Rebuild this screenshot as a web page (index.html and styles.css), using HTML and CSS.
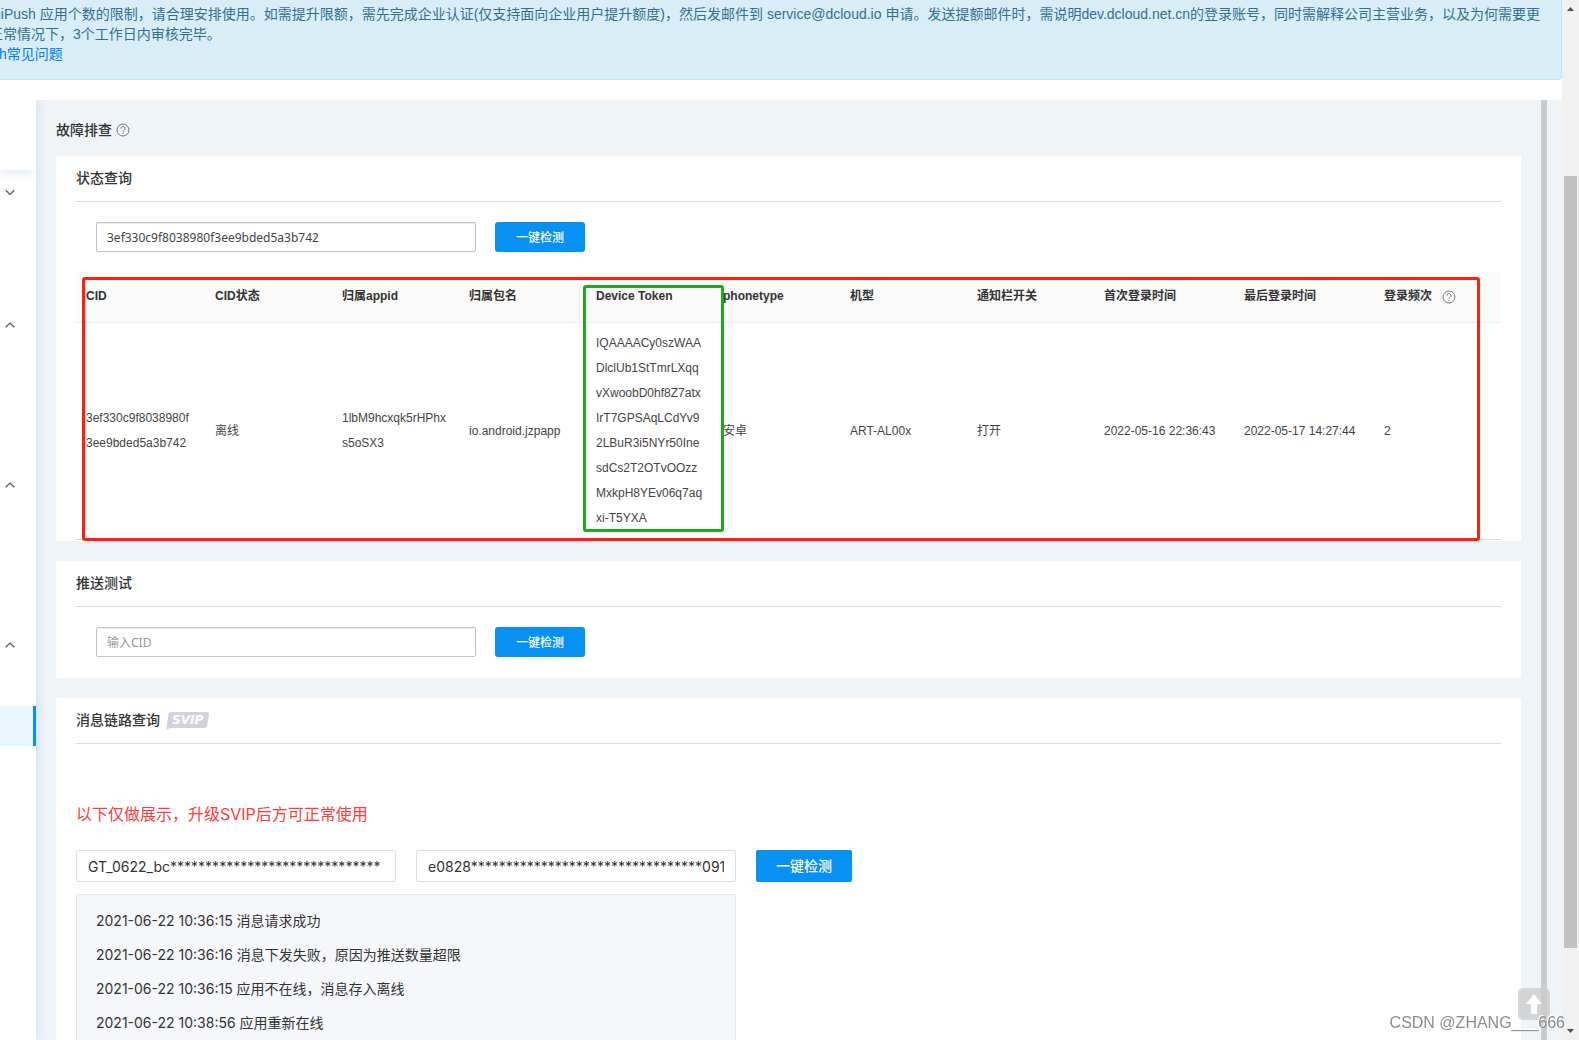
FILE: index.html
```html
<!DOCTYPE html>
<html lang="zh-CN">
<head>
<meta charset="utf-8">
<title>故障排查</title>
<link rel="stylesheet" href="styles.css">
</head>
<body>
<div class="window">
  <div class="page">
    <div class="alert">
      <p class="alert-line">niPush 应用个数的限制，请合理安排使用。如需提升限额，需先完成企业认证(仅支持面向企业用户提升额度)，然后发邮件到 service@dcloud.io 申请。发送提额邮件时，需说明dev.dcloud.net.cn的登录账号，同时需解释公司主营业务，以及为何需要更</p>
      <p class="alert-line alert-line-wide">正常情况下，3个工作日内审核完毕。</p>
      <p class="alert-line alert-line-link"><a href="#faq">h常见问题</a></p>
    </div>
    <div class="workspace">
      <nav class="sidebar" aria-label="菜单">
        <div class="sidebar-head"></div>
        <ul class="menu">
          <li class="group group-first"><button class="toggle" type="button" aria-label="展开"><svg width="10" height="6" viewBox="0 0 10 6"><path d="M.7 1.200 5 5.400 9.300 1.200"/></svg></button></li>
          <li class="group"><button class="toggle" type="button" aria-label="收起"><svg width="10" height="6" viewBox="0 0 10 6"><path d="M.7 5.200 5 1l4.300 4.200"/></svg></button></li>
          <li class="group"><button class="toggle" type="button" aria-label="收起"><svg width="10" height="6" viewBox="0 0 10 6"><path d="M.7 5.200 5 1l4.300 4.200"/></svg></button></li>
          <li class="group"><button class="toggle" type="button" aria-label="收起"><svg width="10" height="6" viewBox="0 0 10 6"><path d="M.7 5.200 5 1l4.300 4.200"/></svg></button><a class="menu-active" href="#check" aria-label="故障排查"></a></li>
        </ul>
      </nav>
      <main class="main">
        <h1 class="title">故障排查
          <svg class="help" width="14" height="14" viewBox="0 0 14 14"><circle cx="7" cy="7" r="6"/><path d="M5 5.600a2 2 0 1 1 3 1.700c-.7.400-1 .7-1 1.400M7 9.700v1.200"/></svg>
        </h1>
        <section class="card">
          <h2 class="card-title">状态查询</h2>
          <form class="query">
            <input class="field" type="text" aria-label="CID" value="3ef330c9f8038980f3ee9bded5a3b742">
            <button class="btn" type="button">一键检测</button>
          </form>
          <div class="table-wrap">
            <table class="table">
              <colgroup><col class="col-cid"><col class="col"><col class="col"><col class="col"><col class="col"><col class="col"><col class="col"><col class="col"><col class="col-time"><col class="col-time"><col class="col"></colgroup>
              <thead>
                <tr><th>CID</th><th>CID状态</th><th>归属appid</th><th>归属包名</th><th class="marked">Device Token<span class="mark-green"></span></th><th>phonetype</th><th>机型</th><th>通知栏开关</th><th>首次登录时间</th><th>最后登录时间</th><th><span class="th-help">登录频次
                  <svg class="help" width="14" height="14" viewBox="0 0 14 14"><circle cx="7" cy="7" r="6"/><path d="M5 5.600a2 2 0 1 1 3 1.700c-.7.400-1 .7-1 1.400M7 9.700v1.200"/></svg></span></th></tr>
              </thead>
              <tbody>
                <tr><td>3ef330c9f8038980f3ee9bded5a3b742</td><td>离线</td><td>1lbM9hcxqk5rHPhxs5oSX3</td><td>io.android.jzpapp</td><td>IQAAAACy0szWAADlclUb1StTmrLXqqvXwoobD0hf8Z7atxIrT7GPSAqLCdYv92LBuR3i5NYr50InesdCs2T2OTvOOzzMxkpH8YEv06q7aqxi-T5YXA</td><td>安卓</td><td>ART-AL00x</td><td>打开</td><td>2022-05-16 22:36:43</td><td>2022-05-17 14:27:44</td><td>2</td></tr>
              </tbody>
            </table>
            <div class="mark-red"></div>
          </div>
        </section>
        <section class="card">
          <h2 class="card-title">推送测试</h2>
          <form class="query">
            <input class="field" type="text" aria-label="CID" placeholder="输入CID">
            <button class="btn" type="button">一键检测</button>
          </form>
        </section>
        <section class="card card-link">
          <h2 class="card-title">消息链路查询
            <svg class="svip" width="43" height="18" viewBox="0 0 43 18"><path d="M5 0h36q2 0 2 2l-2 12q-.4 2-2.400 2H4L0 18 2.600 2Q3 0 5 0z"/><text x="6" y="12">SVIP</text></svg>
          </h2>
          <p class="notice">以下仅做展示，升级SVIP后方可正常使用</p>
          <form class="trace">
            <input class="field-lg" type="text" aria-label="任务ID" value="GT_0622_bc******************************">
            <input class="field-lg" type="text" aria-label="CID" value="e0828*********************************091">
            <button class="btn btn-lg" type="button">一键检测</button>
          </form>
          <ul class="log">
            <li>2021-06-22 10:36:15 消息请求成功</li>
            <li>2021-06-22 10:36:16 消息下发失败，原因为推送数量超限</li>
            <li>2021-06-22 10:36:15 应用不在线，消息存入离线</li>
            <li>2021-06-22 10:38:56 应用重新在线</li>
          </ul>
        </section>
      </main>
      <div class="inner-bar"></div>
    </div>
  </div>
  <div class="scrollbar">
    <svg width="7" height="4" viewBox="0 0 7 4"><path d="M3.500 0 7 4H0z"/></svg>
    <div class="track"><div class="thumb"></div></div>
    <svg width="7" height="4" viewBox="0 0 7 4"><path d="M0 0h7L3.500 4z"/></svg>
  </div>
</div>
<button class="to-top" type="button" aria-label="返回顶部"><svg width="16" height="20" viewBox="0 0 16 20"><path d="M8 0l8 10h-5v10H5V10H0z"/></svg></button>
<div class="watermark">CSDN @ZHANG___666</div>
</body>
</html>
```
FILE: styles.css
```css
* { box-sizing: border-box; }

body,
h1,
h2,
p,
ul {
  margin: 0;
  padding: 0;
}

body {
  font-family: "Liberation Sans", "Noto Sans CJK SC", sans-serif;
  font-size: 14px;
  line-height: 20px;
  color: #333;
  background: #fff;
}

ul { list-style: none; }

input,
button {
  margin: 0;
  font-family: inherit;
}

button {
  border: 0;
  padding: 0;
  cursor: pointer;
}

.window {
  display: flex;
  height: 100vh;
  overflow: hidden;
}

.page {
  flex: 1;
  min-width: 0;
  display: flex;
  flex-direction: column;
  gap: 20px;
}

/* notice bar, scrolled partly out to the left */
.alert {
  flex: none;
  padding: 4px 0 15px;
  overflow: hidden;
  border: 1px solid #bce8f1;
  border-width: 0 1px 1px 0;
  border-bottom-right-radius: 4px;
  background: #d9edf7;
  color: #31708f;
}

.alert-line {
  margin-left: -7px;
  white-space: nowrap;
}

.alert-line-wide { margin-left: -11px; }

.alert-line-link { margin-left: -1px; }

.alert a {
  color: #007bff;
  text-decoration: none;
}

.workspace {
  flex: 1;
  min-height: 0;
  display: flex;
  padding-right: 15px;
  background: #eff4f9;
  overflow: hidden;
}

.sidebar {
  flex: none;
  width: 36px;
  background: #fff;
  box-shadow: 0 0 12px rgba(120, 170, 220, 0.35);
}

.sidebar-head {
  height: 70px;
  box-shadow: 0 2px 10px rgba(120, 160, 220, 0.25);
  clip-path: inset(0 0 -12px 0);
}

.menu { padding-top: 2px; }

.group { height: 160px; }

.group-first { height: 133px; }

.toggle {
  display: flex;
  align-items: center;
  width: 100%;
  height: 40px;
  padding-left: 5px;
  background: none;
}

.toggle path {
  fill: none;
  stroke: #555;
  stroke-width: 1.2;
}

.menu-active {
  display: block;
  height: 40px;
  margin-top: 41px;
  border-right: 3px solid #0791f2;
  background: #e8f6ff;
}

.main {
  flex: 1;
  min-width: 0;
  padding: 20px 20px 0;
}

.title {
  display: flex;
  align-items: center;
  gap: 4px;
  height: 20px;
  margin-bottom: 16px;
  font-size: 14px;
  font-weight: 500;
}

.help {
  fill: none;
  stroke: #777;
}

.card {
  padding: 0 20px 1px;
  margin-bottom: 20px;
  background: #fff;
}

.card-link { height: 600px; }

.card-title {
  display: flex;
  align-items: center;
  gap: 6px;
  height: 46px;
  padding-bottom: 2px;
  border-bottom: 1px solid #ddd;
  font-size: 14px;
  font-weight: 500;
}

.svip { margin-top: 2px; }

.svip path { fill: #d0d3dc; }

.svip text {
  fill: #fff;
  font: italic bold 12px "DejaVu Sans", sans-serif;
}

.query {
  display: flex;
  gap: 19px;
  padding: 20px;
}

.field {
  width: 380px;
  height: 30px;
  padding: 0 10px;
  border: 1px solid #c4c4c4;
  border-radius: 2px;
  box-shadow: inset 0 1px 1px rgba(0, 0, 0, 0.08);
  font: 12px "Noto Sans", "Noto Sans CJK SC", sans-serif;
  color: #444;
}

.field::placeholder { color: #999; }

.btn {
  width: 90px;
  height: 30px;
  padding-bottom: 2px;
  border-radius: 3px;
  background: #0791f2;
  color: #fff;
  font-size: 12px;
  font-weight: 500;
}

.table-wrap { position: relative; }

.table {
  width: 100%;
  table-layout: fixed;
  border-collapse: separate;
  border-spacing: 0;
  font-size: 12px;
  line-height: 25px;
}

.col-cid { width: 129px; }

.col { width: 127px; }

.col-time { width: 140px; }

.table th {
  height: 51px;
  padding: 12px 10px 13px;
  border-bottom: 1px solid #ebeef5;
  background: #fafafa;
  text-align: left;
  vertical-align: top;
  font-weight: 600;
  white-space: nowrap;
}

.table td {
  padding: 8px 10px;
  border-bottom: 1px solid #ddd;
  vertical-align: middle;
  word-break: break-all;
  color: #444;
}

.table td:nth-child(n+9) { white-space: nowrap; }

.th-help {
  display: flex;
  align-items: center;
  gap: 10px;
}

.marked { position: relative; }

.mark-green {
  position: absolute;
  z-index: 2;
  top: 13px;
  left: -3px;
  right: -11px;
  height: 247px;
  border: 3px solid #1aad19;
  border-radius: 3px;
}

.mark-red {
  position: absolute;
  top: 5px;
  right: 21px;
  bottom: -1px;
  left: 6px;
  border: 3px solid #ff1e10;
  border-radius: 3px;
}

.notice {
  padding: 60px 0 26px;
  font: 16px/20px Inter, "Noto Sans CJK SC", sans-serif;
  color: #ff3b3b;
}

.trace {
  display: flex;
  gap: 20px;
  margin-bottom: 12px;
}

.field-lg {
  width: 320px;
  height: 32px;
  padding: 0 11px;
  border: 1px solid #dcdfe6;
  border-radius: 2px;
  font: 14px Inter, "Noto Sans CJK SC", sans-serif;
  color: #333;
}

.btn-lg {
  width: 96px;
  height: 32px;
  border-radius: 2px;
  font-size: 14px;
}

.log {
  width: 660px;
  height: 300px;
  padding: 9px 19px;
  border: 1px solid #e4e7ed;
  border-radius: 2px;
  background: #f5f7fb;
  font: 14px/34px Inter, "Noto Sans CJK SC", sans-serif;
}

.inner-bar {
  flex: none;
  width: 6px;
  background: #ccc;
}

.scrollbar {
  flex: none;
  display: flex;
  flex-direction: column;
  align-items: center;
  gap: 6px;
  width: 17px;
  padding: 7px 2px;
  background: #f1f1f1;
}

.scrollbar path { fill: #505050; }

.track {
  flex: 1;
  align-self: stretch;
  padding: 159px 0 75px;
}

.thumb {
  height: 100%;
  background: #c1c1c1;
}

.to-top {
  position: fixed;
  right: 29px;
  bottom: 20px;
  display: flex;
  align-items: center;
  justify-content: center;
  width: 32px;
  height: 32px;
  border-radius: 5px;
  background: rgba(204, 204, 204, 0.8);
}

.to-top path { fill: #fff; }

.watermark {
  position: fixed;
  right: 14px;
  bottom: 7px;
  font-size: 16px;
  color: #8c8c8c;
  text-shadow: -1px -1px 0 #fff;
}
```
